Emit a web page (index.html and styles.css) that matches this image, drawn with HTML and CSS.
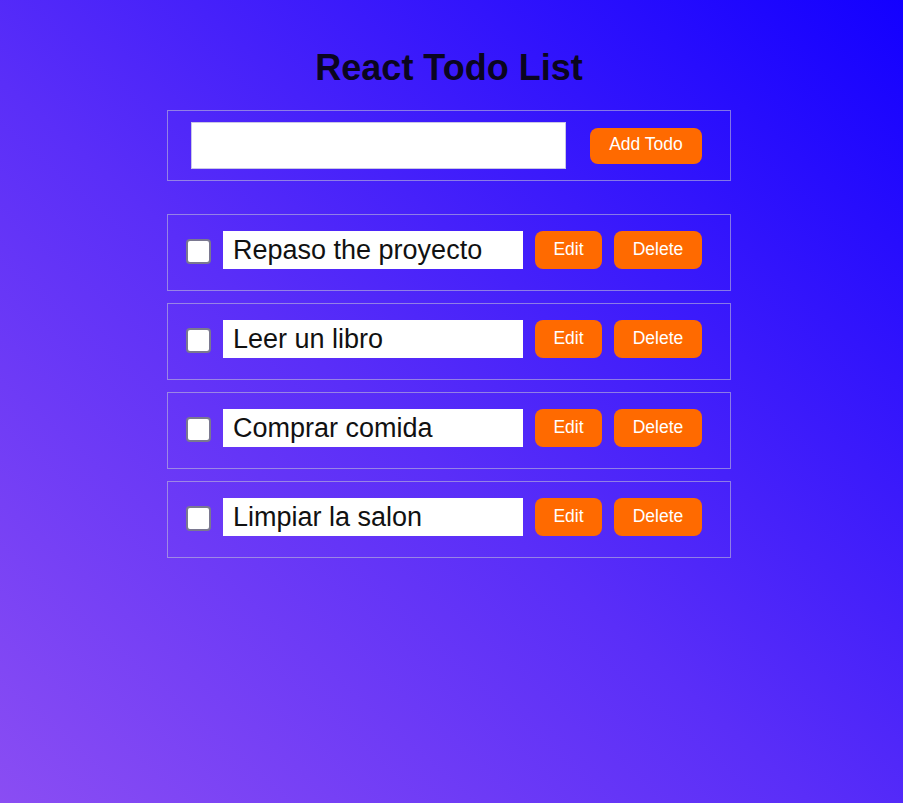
FILE: index.html
```html
<!DOCTYPE html>
<html lang="en">
<head>
<meta charset="utf-8">
<title>React Todo List</title>
<link rel="stylesheet" href="styles.css">
</head>
<body>
<div class="app">
  <h1 class="title">React Todo List</h1>
  <form class="add-form">
    <input class="add-input" type="text" value="">
    <button class="btn btn-add" type="button">Add Todo</button>
  </form>
  <ul class="todo-list">
    <li class="todo">
      <input class="check" type="checkbox">
      <input class="todo-text" type="text" value="Repaso the proyecto">
      <button class="btn btn-edit" type="button">Edit</button>
      <button class="btn btn-delete" type="button">Delete</button>
    </li>
    <li class="todo">
      <input class="check" type="checkbox">
      <input class="todo-text" type="text" value="Leer un libro">
      <button class="btn btn-edit" type="button">Edit</button>
      <button class="btn btn-delete" type="button">Delete</button>
    </li>
    <li class="todo">
      <input class="check" type="checkbox">
      <input class="todo-text" type="text" value="Comprar comida">
      <button class="btn btn-edit" type="button">Edit</button>
      <button class="btn btn-delete" type="button">Delete</button>
    </li>
    <li class="todo">
      <input class="check" type="checkbox">
      <input class="todo-text" type="text" value="Limpiar la salon">
      <button class="btn btn-edit" type="button">Edit</button>
      <button class="btn btn-delete" type="button">Delete</button>
    </li>
  </ul>
</div>
</body>
</html>
```

FILE: styles.css
```css
html, body {
  margin: 0;
  height: 100%;
}

body {
  background: linear-gradient(to top right, #8a4df3 0%, #5a2ef8 45%, #1300ff 100%);
  font-family: "Liberation Sans", Arial, sans-serif;
  padding-right: 5px;
  box-sizing: border-box;
}

.app {
  width: 564px;
  margin: 0 auto;
}

.title {
  margin: 47px 0 21px;
  font-size: 36px;
  line-height: 42px;
  font-weight: bold;
  text-align: center;
  color: #0a0520;
}

.add-form {
  display: flex;
  align-items: center;
  gap: 24px;
  margin: 0 0 33px;
  padding: 11px 28px 11px 23px;
  border: 1px solid rgba(200, 200, 215, 0.55);
}

.add-input {
  width: 375px;
  height: 47px;
  box-sizing: border-box;
  margin: 0;
  border: 1px solid #c9c6e6;
  background: #fff;
  font-size: 20px;
  font-family: inherit;
}

.btn {
  border: none;
  border-radius: 8px;
  background: #ff6a00;
  color: #fff;
  font-family: inherit;
  font-size: 17.5px;
  padding: 0 0 2px;
  margin: 0;
  cursor: pointer;
}

.btn-add {
  width: 112px;
  height: 36px;
}

.todo-list {
  list-style: none;
  margin: 0;
  padding: 0;
  display: flex;
  flex-direction: column;
  gap: 12px;
}

.todo {
  display: flex;
  align-items: center;
  gap: 12px;
  padding: 16px 28px 21px 18px;
  border: 1px solid rgba(200, 200, 215, 0.55);
}

.check {
  appearance: none;
  -webkit-appearance: none;
  width: 25px;
  height: 25px;
  margin: 2px 0 0;
  box-sizing: border-box;
  background: #fff;
  border: 2px solid #7a7890;
  border-radius: 4px;
}

.todo-text {
  width: 300px;
  height: 38px;
  box-sizing: border-box;
  margin: 0;
  padding: 0 0 0 10px;
  border: none;
  background: #fff;
  color: #111;
  font-family: inherit;
  font-size: 27px;
}

.btn-edit {
  width: 67px;
  height: 38px;
}

.btn-delete {
  width: 88px;
  height: 38px;
}
```
